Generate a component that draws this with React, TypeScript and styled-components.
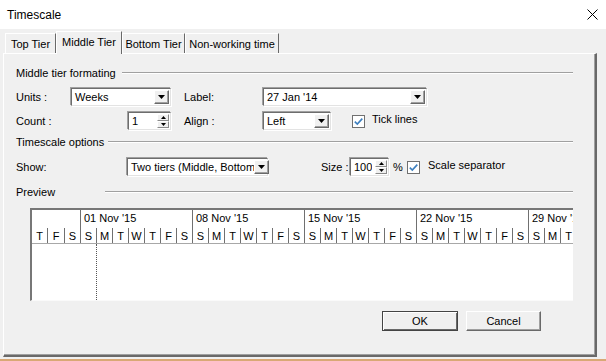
import React from 'react'
import styled, { createGlobalStyle } from 'styled-components'

const GlobalStyle = createGlobalStyle`
  html, body {
    margin: 0;
    padding: 0;
    background: #f0f0f0;
  }
  body {
    font-family: "Liberation Sans", Arial, sans-serif;
    font-size: 11px;
    color: #000;
  }
`

const Window = styled.div`
  width: 606px;
  height: 361px;
  box-sizing: border-box;
  display: flex;
  flex-direction: column;
  background: #f0f0f0;
  border-bottom: 2px solid #d9a875;
  overflow: hidden;
`

const TitleBar = styled.div`
  flex: none;
  height: 29px;
  display: flex;
  align-items: center;
  justify-content: space-between;
  background: #fff;
  padding: 0 8px 0 7px;
`

const Title = styled.span`
  font-size: 12px;
`

const Body = styled.div`
  flex: 1;
  display: flex;
  flex-direction: column;
  padding: 0 9px 0 3px;
`

const TabStrip = styled.div`
  flex: none;
  height: 24px;
  display: flex;
  align-items: flex-end;
  padding-left: 2px;
  position: relative;
  z-index: 1;
`

const Tab = styled.div<{ $w: number; $active?: boolean }>`
  width: ${p => p.$w}px;
  height: ${p => (p.$active ? 23 : 20)}px;
  margin-bottom: ${p => (p.$active ? -1 : 0)}px;
  box-sizing: border-box;
  display: flex;
  align-items: center;
  justify-content: center;
  background: #f0f0f0;
  border-top: 1px solid #fff;
  border-left: 1px solid #fff;
  border-right: 1px solid #696969;
  padding-bottom: ${p => (p.$active ? 2 : 0)}px;
  white-space: nowrap;
`

const Panel = styled.div`
  flex: none;
  height: 304px;
  box-sizing: border-box;
  display: flex;
  flex-direction: column;
  border-top: 1px solid #fff;
  border-left: 1px solid #fff;
  border-right: 2px solid #696969;
  border-bottom: 2px solid #696969;
  box-shadow: inset -1px -1px 0 #a0a0a0;
  padding: 12px 22px 0 12px;
`

const GroupHeader = styled.div<{ $top: number }>`
  flex: none;
  height: 14px;
  margin-top: ${p => p.$top}px;
  display: flex;
  align-items: center;
`

const GroupTitle = styled.span<{ $col: number }>`
  width: ${p => p.$col}px;
  flex: none;
  white-space: nowrap;
`

const GroupLine = styled.div`
  flex: 1;
  height: 0;
  border-top: 1px solid #a0a0a0;
  border-bottom: 1px solid #fff;
`

const Row = styled.div<{ $top: number }>`
  flex: none;
  height: 18px;
  margin-top: ${p => p.$top}px;
  display: flex;
  align-items: center;
`

const FieldLabel = styled.span<{ $w: number; $ml?: number }>`
  width: ${p => p.$w}px;
  margin-left: ${p => p.$ml ?? 0}px;
  flex: none;
  white-space: nowrap;
`

const Field = styled.div<{ $w: number }>`
  width: ${p => p.$w}px;
  height: 18px;
  flex: none;
  box-sizing: border-box;
  display: flex;
  align-items: center;
  background: #fff;
  border: 1px solid;
  border-color: #6d6d6d #e3e3e3 #e3e3e3 #6d6d6d;
  box-shadow: -1px -1px 0 #a0a0a0, 1px 1px 0 #fff;
`

const FieldText = styled.span<{ $clip?: number }>`
  flex: ${p => (p.$clip ? 'none' : '1')};
  width: ${p => (p.$clip ? `${p.$clip}px` : 'auto')};
  padding-left: 3px;
  overflow: hidden;
  white-space: nowrap;
`

const Gap = styled.span`
  flex: 1;
`

const ArrowButton = styled.div`
  flex: none;
  width: 15px;
  height: 14px;
  margin-right: 1px;
  box-sizing: border-box;
  display: flex;
  align-items: center;
  justify-content: center;
  background: #f0f0f0;
  border: 1px solid;
  border-color: #fff #696969 #696969 #fff;
  box-shadow: inset -1px -1px 0 #a0a0a0;
`

const Spinner = styled.div`
  flex: none;
  width: 12px;
  height: 14px;
  margin-right: 1px;
  display: flex;
  flex-direction: column;
`

const SpinHalf = styled.div`
  flex: 1;
  box-sizing: border-box;
  display: flex;
  align-items: center;
  justify-content: center;
  background: #f0f0f0;
  border: 1px solid;
  border-color: #fff #8a8a8a #8a8a8a #fff;
`

const Check = styled.div<{ $ml: number }>`
  width: 13px;
  height: 13px;
  margin-left: ${p => p.$ml}px;
  flex: none;
  box-sizing: border-box;
  display: flex;
  align-items: center;
  justify-content: center;
  background: #fff;
  border: 1px solid #707070;
`

const CheckText = styled.span<{ $ml: number }>`
  margin-left: ${p => p.$ml}px;
  white-space: nowrap;
  align-self: flex-start;
  margin-top: 1px;
`

const Preview = styled.div`
  flex: none;
  width: 543px;
  height: 93px;
  margin: 9px 0 0 14px;
  box-sizing: border-box;
  display: flex;
  flex-direction: column;
  background: #fff;
  border-left: 2px solid #777;
  border-top: 2px solid #777;
  border-bottom: 1px solid #fafafa;
  overflow: hidden;
`

const Timeline = styled.div`
  flex: none;
  display: flex;
  border-bottom: 1px solid #a8a8a8;
`

const Week = styled.div<{ $days: number; $first?: boolean }>`
  flex: none;
  width: ${p => p.$days * 16}px;
  box-sizing: border-box;
  border-left: ${p => (p.$first ? 'none' : '1px solid #707070')};
  display: flex;
  flex-direction: column;
`

const WeekLabel = styled.div`
  height: 18px;
  box-sizing: border-box;
  padding: 1px 0 0 3px;
  line-height: 14px;
  white-space: nowrap;
`

const Days = styled.div`
  display: flex;
  height: 15px;
`

const Day = styled.div`
  flex: 1;
  box-sizing: border-box;
  padding-top: 2px;
  line-height: 13px;
  text-align: center;
  & + & {
    border-left: 1px solid #707070;
  }
`

const PreviewBody = styled.div`
  flex: 1;
  display: flex;
  padding-left: 64px;
`

const TodayLine = styled.div`
  border-left: 1px dotted #555;
`

const Buttons = styled.div`
  flex: none;
  height: 20px;
  margin-top: 10px;
  padding-right: 32px;
  display: flex;
  justify-content: flex-end;
  gap: 8px;
`

const Button = styled.div<{ $w: number; $default?: boolean }>`
  width: ${p => p.$w}px;
  box-sizing: border-box;
  display: flex;
  align-items: center;
  justify-content: center;
  background: #f0f0f0;
  border: 1px solid;
  border-color: ${p => (p.$default ? '#444' : '#fff #696969 #696969 #fff')};
  box-shadow: ${p =>
    p.$default
      ? 'inset 1px 1px 0 #fff, inset -1px -1px 0 #696969'
      : 'inset -1px -1px 0 #a0a0a0'};
`

const DownArrow = () => (
  <svg width="7" height="4" viewBox="0 0 7 4">
    <path d="M0 0H7L3.5 4Z" fill="#000" />
  </svg>
)

const SmallArrow = ({ up }: { up?: boolean }) => (
  <svg width="5" height="3" viewBox="0 0 5 3">
    <path d={up ? 'M0 3H5L2.5 0Z' : 'M0 0H5L2.5 3Z'} fill="#000" />
  </svg>
)

const Tick = () => (
  <svg width="11" height="11" viewBox="0 0 11 11">
    <path d="M1.8 5.6L4.3 8.1L9.3 2.6" fill="none" stroke="#3d7fbf" strokeWidth="1.6" />
  </svg>
)

const CloseIcon = () => (
  <svg width="11" height="11" viewBox="0 0 11 11">
    <path d="M0.5 0.5L10.5 10.5M10.5 0.5L0.5 10.5" stroke="#000" strokeWidth="1" />
  </svg>
)

const Select = ({ w, value, clip }: { w: number; value: string; clip?: number }) => (
  <Field $w={w}>
    <FieldText $clip={clip}>{value}</FieldText>
    {clip && <Gap />}
    <ArrowButton>
      <DownArrow />
    </ArrowButton>
  </Field>
)

const Spin = ({ w, value, clip }: { w: number; value: string; clip?: number }) => (
  <Field $w={w}>
    <FieldText $clip={clip}>{value}</FieldText>
    {clip && <Gap />}
    <Spinner>
      <SpinHalf>
        <SmallArrow up />
      </SpinHalf>
      <SpinHalf>
        <SmallArrow />
      </SpinHalf>
    </Spinner>
  </Field>
)

const weekDays = ['S', 'M', 'T', 'W', 'T', 'F', 'S']
const weeks = ["01 Nov '15", "08 Nov '15", "15 Nov '15", "22 Nov '15", "29 Nov '15"]

const App: React.FC = () => {
  return (
    <>
      <GlobalStyle />
      <Window>
        <TitleBar>
          <Title>Timescale</Title>
          <CloseIcon />
        </TitleBar>
        <Body>
          <TabStrip>
            <Tab $w={51}>Top Tier</Tab>
            <Tab $w={66} $active>Middle Tier</Tab>
            <Tab $w={63}>Bottom Tier</Tab>
            <Tab $w={94}>Non-working time</Tab>
          </TabStrip>
          <Panel>
            <GroupHeader $top={0}>
              <GroupTitle $col={106}>Middle tier formating</GroupTitle>
              <GroupLine />
            </GroupHeader>
            <Row $top={8}>
              <FieldLabel $w={55}>Units :</FieldLabel>
              <Select w={100} value="Weeks" />
              <FieldLabel $w={79} $ml={13}>Label:</FieldLabel>
              <Select w={164} value="27 Jan '14" />
            </Row>
            <Row $top={6}>
              <FieldLabel $w={112}>Count :</FieldLabel>
              <Spin w={43} value="1" />
              <FieldLabel $w={79} $ml={13}>Align :</FieldLabel>
              <Select w={68} value="Left" />
              <Check $ml={21}>
                <Tick />
              </Check>
              <CheckText $ml={7}>Tick lines</CheckText>
            </Row>
            <GroupHeader $top={5}>
              <GroupTitle $col={92}>Timescale options</GroupTitle>
              <GroupLine />
            </GroupHeader>
            <Row $top={9}>
              <FieldLabel $w={111}>Show:</FieldLabel>
              <Select w={141} value="Two tiers (Middle, Bottom)" clip={123} />
              <FieldLabel $w={29} $ml={53}>Size :</FieldLabel>
              <Spin w={39} value="100" clip={18} />
              <FieldLabel $w={14} $ml={4}>%</FieldLabel>
              <Check $ml={0}>
                <Tick />
              </Check>
              <CheckText $ml={8}>Scale separator</CheckText>
            </Row>
            <GroupHeader $top={9}>
              <GroupTitle $col={89}>Preview</GroupTitle>
              <GroupLine />
            </GroupHeader>
            <Preview>
              <Timeline>
                <Week $days={3} $first>
                  <WeekLabel />
                  <Days>
                    <Day>T</Day>
                    <Day>F</Day>
                    <Day>S</Day>
                  </Days>
                </Week>
                {weeks.map(w => (
                  <Week key={w} $days={7}>
                    <WeekLabel>{w}</WeekLabel>
                    <Days>
                      {weekDays.map((d, i) => (
                        <Day key={i}>{d}</Day>
                      ))}
                    </Days>
                  </Week>
                ))}
              </Timeline>
              <PreviewBody>
                <TodayLine />
              </PreviewBody>
            </Preview>
            <Buttons>
              <Button $w={76} $default>OK</Button>
              <Button $w={75}>Cancel</Button>
            </Buttons>
          </Panel>
        </Body>
      </Window>
    </>
  )
}

export default App
